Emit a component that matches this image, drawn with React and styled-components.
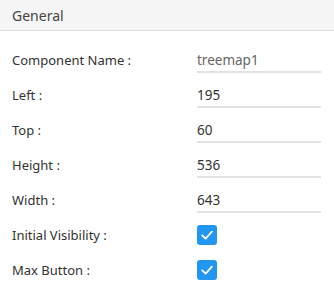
import styled, { createGlobalStyle } from "styled-components";

const GlobalStyle = createGlobalStyle`
  body {
    margin: 0;
    background: #ffffff;
    font-family: "Noto Sans", "Open Sans", sans-serif;
  }
`;

const fields = [
  { label: "Component Name :", value: "treemap1", muted: true },
  { label: "Left :", value: "195" },
  { label: "Top :", value: "60" },
  { label: "Height :", value: "536" },
  { label: "Width :", value: "643" }
];

const checks = [
  { label: "Initial Visibility :", checked: true },
  { label: "Max Button :", checked: true }
];

const CheckIcon = () => (
  <svg width="14" height="14" viewBox="0 0 14 14" fill="none">
    <path
      d="M2.2 7.3 L5.6 10.6 L11.9 3.6"
      stroke="#ffffff"
      strokeWidth="1.8"
      strokeLinecap="round"
      strokeLinejoin="round"
    />
  </svg>
);

const App = () => {
  return (
    <Panel>
      <GlobalStyle />
      <Header>General</Header>
      <Body>
        {fields.map(field => (
          <Row key={field.label}>
            <Label>{field.label}</Label>
            <Input $muted={field.muted}>{field.value}</Input>
          </Row>
        ))}
        {checks.map(check => (
          <Row key={check.label}>
            <Label>{check.label}</Label>
            <CheckBox $checked={check.checked}>
              {check.checked && <CheckIcon />}
            </CheckBox>
          </Row>
        ))}
      </Body>
    </Panel>
  );
};

const Panel = styled.div`
  width: 334px;
  height: 296px;
  background: #ffffff;
  color: #333333;
  font-size: 13px;
`;

const Header = styled.div`
  height: 30px;
  padding-left: 12px;
  display: flex;
  align-items: center;
  background-color: #f5f5f5;
  border-bottom: 1px solid #dcdcdc;
  color: #444444;
  font-size: 14px;
`;

const Body = styled.div`
  padding-top: 11px;
  display: flex;
  flex-direction: column;
`;

const Row = styled.div`
  height: 35px;
  display: grid;
  grid-template-columns: 185px 124px;
  align-items: center;
  padding-left: 12px;
`;

const Label = styled.span`
  color: #333333;
`;

const Input = styled.div`
  height: 26px;
  box-sizing: border-box;
  padding-top: 4px;
  border-bottom: 2px solid #e2e2e2;
  color: ${({ $muted }) => ($muted ? "#666666" : "#333333")};
  font-size: 13.5px;
`;

const CheckBox = styled.div`
  width: 20px;
  height: 20px;
  border-radius: 3px;
  background-color: ${({ $checked }) => ($checked ? "#2196f3" : "#ffffff")};
  display: flex;
  align-items: center;
  justify-content: center;
`;

export default App;
